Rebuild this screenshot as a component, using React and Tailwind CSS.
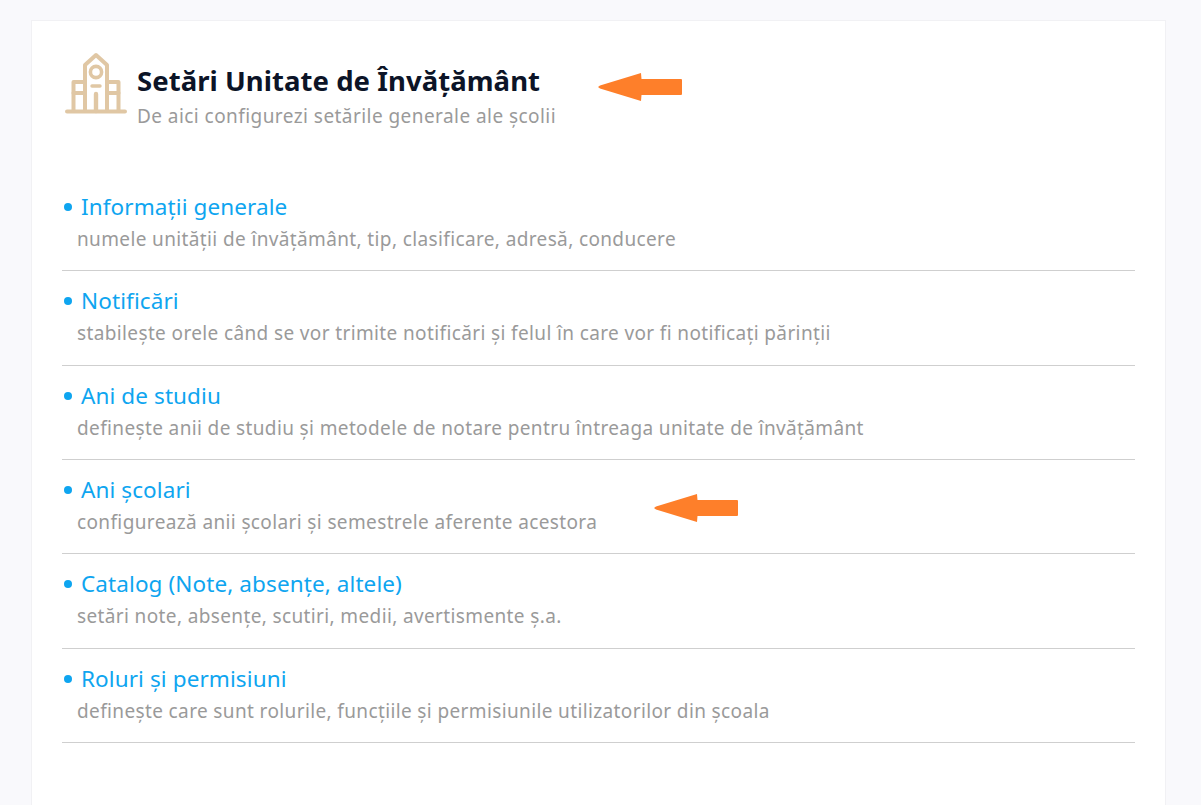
const items = [
  ["Informații generale", "numele unității de învățământ, tip, clasificare, adresă, conducere"],
  ["Notificări", "stabilește orele când se vor trimite notificări și felul în care vor fi notificați părinții"],
  ["Ani de studiu", "definește anii de studiu și metodele de notare pentru întreaga unitate de învățământ"],
  ["Ani școlari", "configurează anii școlari și semestrele aferente acestora"],
  ["Catalog (Note, absențe, altele)", "setări note, absențe, scutiri, medii, avertismente ș.a."],
  ["Roluri și permisiuni", "definește care sunt rolurile, funcțiile și permisiunile utilizatorilor din școala"],
];

function Arrow({ className }) {
  return (
    <svg className={className} width="86" height="32" viewBox="0 0 86 32" fill="#fe7f2a">
      <path d="M1 17 L3 15.5 L44 3 L44.5 9 L84 9 Q85 9 85 10 L85 24 Q85 25 84 25 L44.5 25 L44 31 L3 18.5 Z" />
    </svg>
  );
}

function School() {
  return (
    <svg className="shrink-0" width="62" height="64" viewBox="0 0 62 64" fill="none" stroke="#e0c7a4" strokeWidth="4" strokeLinecap="round" strokeLinejoin="round">
      <path d="M2 59.5 H60" strokeWidth="4" />
      <path d="M20 59 V13 L31 3 L42 13 V59" />
      <path d="M20 30 H8.5 V59 M42 30 H53.5 V59" />
      <path d="M8.5 41 H20 M42 41 H53.5" />
      <circle cx="31" cy="20" r="5.6" strokeWidth="3.6" />
      <path d="M27 34 H35" strokeWidth="3.4" />
      <path d="M31 42 V59" strokeWidth="4.4" />
    </svg>
  );
}

export default function App() {
  return (
    <div className="h-[805px] overflow-hidden bg-[#f9f9fc] pl-[31px] pr-[35px] pt-5" style={{ fontFamily: '"Noto Sans", sans-serif' }}>
      <div className="relative h-[800px] border border-[#f1f1f4] bg-white pl-[30px] pr-[30px] pt-[31px]">
        <div className="flex items-start gap-[10px] pl-[3px]">
          <School />
          <div className="mt-[9px]">
            <h1 className="text-[27.5px] leading-[40px] font-bold tracking-[0.05px] text-[#0c1427]">Setări Unitate de Învățământ</h1>
            <p className="text-[19px] leading-[30px] tracking-[0.44px] text-[#9a9a9a]">De aici configurezi setările generale ale școlii</p>
          </div>
        </div>
        <Arrow className="absolute left-[565px] top-[49px]" />
        <Arrow className="absolute left-[621px] top-[470px]" />
        <ul className="mt-[45.8px]">
          {items.map(([t, d]) => (
            <li key={t} className="h-[94.4px] border-b border-[#cfcfcf] pt-[14px]">
              <div className="flex items-center text-[22.5px] leading-[32px] tracking-[0.1px] text-[#0ea5f0]">
                <span className="mr-[9px] ml-[2px] inline-block h-[8px] w-[8px] rounded-full bg-[#0ea5f0]" />
                {t}
              </div>
              <p className="mt-[2px] pl-[15px] text-[19px] leading-[28px] tracking-[0.37px] text-[#9a9a9a]">{d}</p>
            </li>
          ))}
        </ul>
      </div>
    </div>
  );
}
